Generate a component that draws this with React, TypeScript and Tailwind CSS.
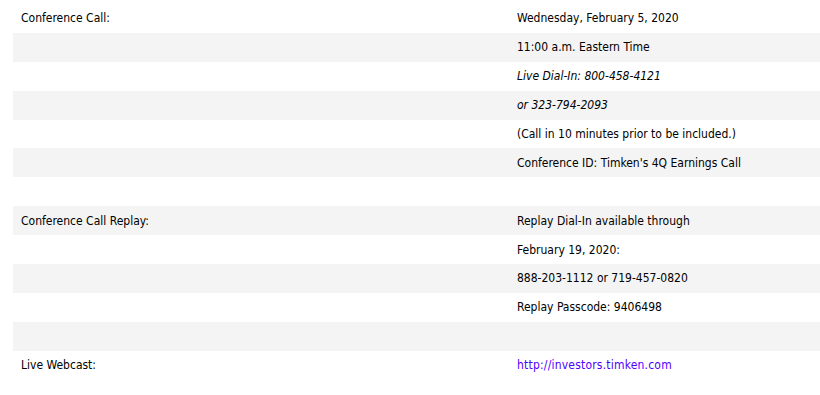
import React from 'react';

type Row = { label?: string; value?: React.ReactNode };

const rows: Row[] = [
  { label: 'Conference Call:', value: 'Wednesday, February 5, 2020' },
  { value: '11:00 a.m. Eastern Time' },
  { value: <em>Live Dial-In: 800-458-4121</em> },
  { value: <em>or 323-794-2093</em> },
  { value: '(Call in 10 minutes prior to be included.)' },
  { value: "Conference ID: Timken's 4Q Earnings Call" },
  {},
  { label: 'Conference Call Replay:', value: 'Replay Dial-In available through' },
  { value: 'February 19, 2020:' },
  { value: '888-203-1112 or 719-457-0820' },
  { value: 'Replay Passcode: 9406498' },
  {},
  {
    label: 'Live Webcast:',
    value: (
      <a href="#" className="tracking-[0.2px] text-[#5000ff]">
        http://investors.timken.com
      </a>
    ),
  },
];

export default function App() {
  return (
    <div className="min-h-[395px] bg-white pt-[4px] pl-[13px] font-['DejaVu_Sans_Condensed','DejaVu_Sans',sans-serif] text-[12px] text-black">
      {rows.map((r, i) => (
        <div key={i} className={`grid h-[28.9px] grid-cols-[496px_1fr] items-center ${i % 2 ? 'bg-[#f4f4f4]' : ''}`}>
          <div className="px-[8px]">{r.label}</div>
          <div className="px-[8px]">{r.value}</div>
        </div>
      ))}
    </div>
  );
}
